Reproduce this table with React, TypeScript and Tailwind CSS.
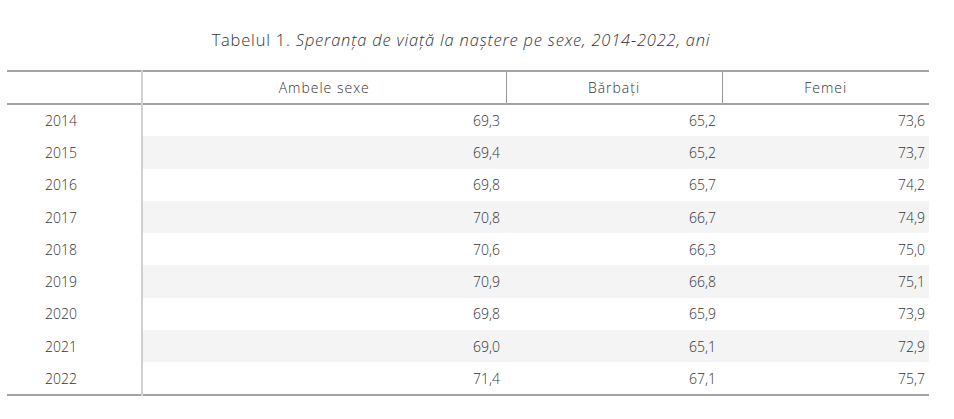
const rows: [string, string, string, string][] = [
  ['2014', '69,3', '65,2', '73,6'],
  ['2015', '69,4', '65,2', '73,7'],
  ['2016', '69,8', '65,7', '74,2'],
  ['2017', '70,8', '66,7', '74,9'],
  ['2018', '70,6', '66,3', '75,0'],
  ['2019', '70,9', '66,8', '75,1'],
  ['2020', '69,8', '65,9', '73,9'],
  ['2021', '69,0', '65,1', '72,9'],
  ['2022', '71,4', '67,1', '75,7'],
]

export default function App() {
  return (
    <div
      className="min-h-screen bg-white text-[#333] pl-[7px] pr-[25px] font-light"
      style={{ fontFamily: '"Open Sans", Lato, sans-serif' }}
    >
      {/* Caption */}
      <div className="pt-[29px] pb-[19px] text-center text-[16.5px] leading-[22px] tracking-[0.8px] pr-[14px]">
        Tabelul 1. <i>Speranța de viață la naștere pe sexe, 2014-2022, ani</i>
      </div>

      {/* Table */}
      <table className="w-[922px] border-collapse text-[14px] table-fixed">
        <colgroup>
          <col className="w-[135px]" />
          <col className="w-[364px]" />
          <col className="w-[216px]" />
          <col className="w-[207px]" />
        </colgroup>
        <thead>
          <tr className="h-[33px] border-t-[2px] border-b-[2px] border-[#a3a3a3] tracking-[1px]">
            <th className="border-r-[2px] border-[#d0d0d0]"></th>
            <th className="font-light text-center border-r border-[#9a9a9a]">Ambele sexe</th>
            <th className="font-light text-center border-r border-[#9a9a9a]">Bărbați</th>
            <th className="font-light text-center">Femei</th>
          </tr>
        </thead>
        <tbody className="border-b-[2px] border-[#a3a3a3]">
          {rows.map((r, i) => (
            <tr key={r[0]} className={`h-[32.3px] ${i % 2 === 1 ? 'bg-[#f4f4f4]' : 'bg-white'}`}>
              <td className="pl-[38px] text-left border-r-[2px] border-[#d0d0d0] bg-white">{r[0]}</td>
              <td className="pr-[6px] text-right">{r[1]}</td>
              <td className="pr-[6px] text-right">{r[2]}</td>
              <td className="pr-[4px] text-right">{r[3]}</td>
            </tr>
          ))}
        </tbody>
      </table>
    </div>
  )
}
